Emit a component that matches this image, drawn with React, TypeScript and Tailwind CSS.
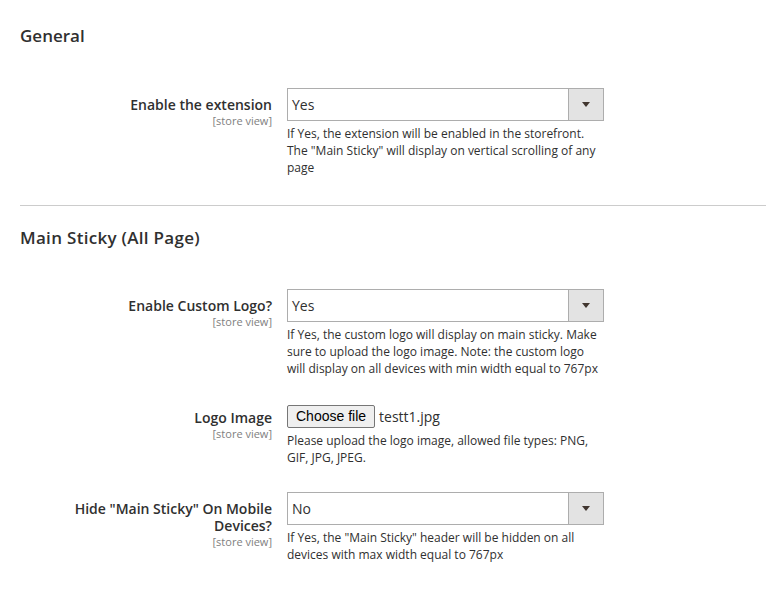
import React from "react";

const font = { fontFamily: '"Open Sans", "Noto Sans", sans-serif' };

function Label({ text, scope }: { text: React.ReactNode; scope: string }) {
  return (
    <div className="w-[252px] shrink-0 pt-[8px] text-right">
      <div className="text-[14px] font-semibold leading-[17px] text-[#303030]">{text}</div>
      <div className="mt-[1px] text-[11px] leading-[14px] text-[#808080]">{scope}</div>
    </div>
  );
}

function Select({ value }: { value: string }) {
  return (
    <div className="flex h-[33px] w-[317px] border border-[#adadad] bg-white">
      <div className="flex flex-1 items-center pl-[4px] text-[14px] text-[#303030]">{value}</div>
      <div className="flex w-[35px] items-center justify-center border-l border-[#adadad] bg-[#e3e3e3]">
        <svg width="8" height="5" viewBox="0 0 8 5">
          <path d="M0 0 L8 0 L4 5 Z" fill="#41362f" />
        </svg>
      </div>
    </div>
  );
}

function Note({ children }: { children: React.ReactNode }) {
  return <div className="mt-[4px] w-[317px] text-[12px] leading-[17px] text-[#303030]">{children}</div>;
}

function Row({ label, scope, children }: { label: React.ReactNode; scope: string; children: React.ReactNode }) {
  return (
    <div className="flex gap-[15px]">
      <Label text={label} scope={scope} />
      <div className="flex flex-col">{children}</div>
    </div>
  );
}

export default function App() {
  return (
    <div className="min-h-[592px] w-[766px] bg-white" style={font}>
      <div className="pl-[20px]">
        {/* General */}
        <h2 className="pt-[24px] text-[17px] font-semibold leading-[23px] text-[#303030]">General</h2>
        <div className="mt-[41px] pb-[29px]">
          <Row label="Enable the extension" scope="[store view]">
            <Select value="Yes" />
            <Note>
              If Yes, the extension will be enabled in the storefront. The "Main Sticky" will display on vertical
              scrolling of any page
            </Note>
          </Row>
        </div>

        <div className="h-px bg-[#cccccc]" />

        {/* Main Sticky */}
        <h2 className="pt-[20px] text-[17px] font-semibold leading-[23px] tracking-[0.3px] text-[#303030]">
          Main Sticky (All Page)
        </h2>
        <div className="mt-[40px] flex flex-col gap-[24px]">
          <Row label="Enable Custom Logo?" scope="[store view]">
            <Select value="Yes" />
            <Note>
              If Yes, the custom logo will display on main sticky. Make sure to upload the logo image. Note: the custom
              logo will display on all devices with min width equal to 767px
            </Note>
          </Row>

          <Row label="Logo Image" scope="[store view]">
            <div className="mt-[4px] flex items-center gap-[4px]">
              <span
                className="flex h-[23px] items-center rounded-[2px] border border-[#767676] bg-[#efefef] px-[8px] text-[14px] text-black"
                style={{ fontFamily: '"Liberation Sans", Arial, sans-serif' }}
              >
                Choose file
              </span>
              <span className="text-[14px] text-[#303030]">testt1.jpg</span>
            </div>
            <Note>Please upload the logo image, allowed file types: PNG, GIF, JPG, JPEG.</Note>
          </Row>

          <div className="mt-[2px]">
            <Row
              label={
                <>
                  Hide "Main Sticky" On Mobile
                  <br />
                  Devices?
                </>
              }
              scope="[store view]"
            >
              <Select value="No" />
              <Note>If Yes, the "Main Sticky" header will be hidden on all devices with max width equal to 767px</Note>
            </Row>
          </div>
        </div>
      </div>
    </div>
  );
}
